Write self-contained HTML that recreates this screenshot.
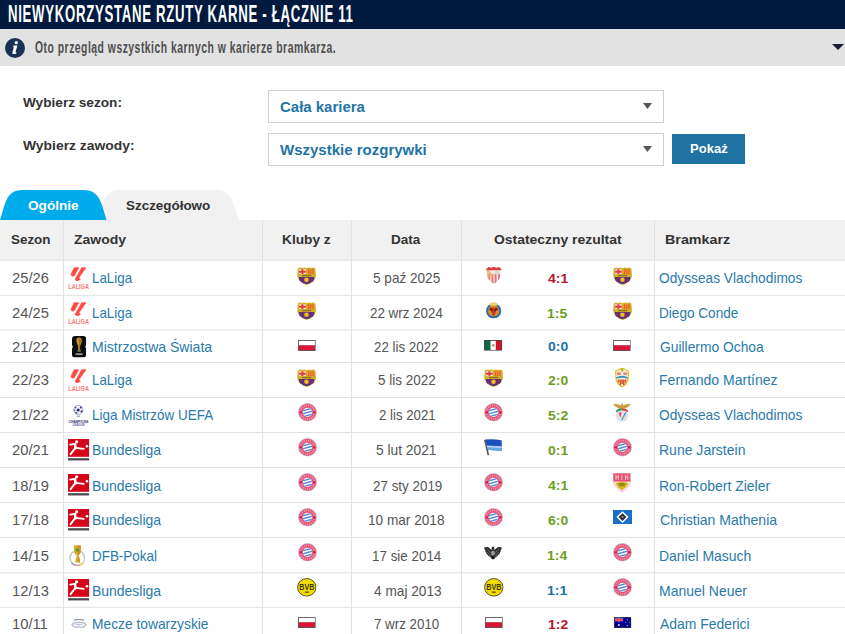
<!DOCTYPE html><html><head><meta charset="utf-8"><style>
html,body{margin:0;padding:0;width:845px;height:634px;overflow:hidden;background:#fff;font-family:"Liberation Sans",sans-serif;}
.t{position:absolute;white-space:nowrap;line-height:0;}
.a{position:absolute;}
svg{position:absolute;overflow:visible;}
</style></head><body>
<div class="a" style="left:0;top:0;width:845px;height:29px;background:#001a3f"></div>
<div class="t" style="left:8.43px;top:13.55px;font-size:23.0px;font-weight:700;color:#fff;transform:scaleX(0.5743);transform-origin:0 0;letter-spacing:1.2px;">NIEWYKORZYSTANE RZUTY KARNE - ŁĄCZNIE 11</div>
<div class="a" style="left:0;top:29px;width:845px;height:37px;background:#e2e2e2"></div>
<svg style="left:5px;top:38px" width="20" height="20" viewBox="0 0 20 20"><circle cx="10" cy="10" r="10" fill="#1b3152"/><circle cx="11.3" cy="4.6" r="1.7" fill="#fff"/><path d="M8.6 7.6 L12.4 7.6 L10.6 13.8 Q10.4 14.8 11.6 14.4 L11.3 15.5 Q9.6 16.4 8 16 Q7 15.6 7.4 14.2 L8.9 9 L8 9 Z" fill="#fff"/></svg>
<div class="t" style="left:35.00px;top:47.92px;font-size:16.8px;font-weight:700;color:#4f4f4f;transform:scaleX(0.6190);transform-origin:0 0;letter-spacing:0.8px;">Oto przegląd wszystkich karnych w karierze bramkarza.</div>
<svg style="left:832px;top:44px" width="12" height="6" viewBox="0 0 12 6"><path d="M0 0 H12 L6 6 Z" fill="#1a1f33"/></svg>
<div class="t" style="left:22.90px;top:102.78px;font-size:13.5px;font-weight:700;color:#333;transform:scaleX(1.0093);transform-origin:0 0;">Wybierz sezon:</div>
<div class="t" style="left:22.90px;top:145.58px;font-size:13.5px;font-weight:700;color:#333;transform:scaleX(1.0287);transform-origin:0 0;">Wybierz zawody:</div>
<div class="a" style="left:268px;top:90px;width:394px;height:31px;border:1px solid #cfcfcf;background:#fff"></div>
<div class="t" style="left:279.50px;top:106.98px;font-size:15.2px;font-weight:700;color:#1f74a6;transform:scaleX(0.9851);transform-origin:0 0;">Cała kariera</div>
<svg style="left:643px;top:103px" width="9" height="6" viewBox="0 0 9 6"><path d="M0 0 H9 L4.5 6 Z" fill="#555"/></svg>
<div class="a" style="left:268px;top:133px;width:394px;height:31px;border:1px solid #cfcfcf;background:#fff"></div>
<div class="t" style="left:279.70px;top:149.98px;font-size:15.2px;font-weight:700;color:#1f74a6;transform:scaleX(0.9878);transform-origin:0 0;">Wszystkie rozgrywki</div>
<svg style="left:643px;top:146px" width="9" height="6" viewBox="0 0 9 6"><path d="M0 0 H9 L4.5 6 Z" fill="#555"/></svg>
<div class="a" style="left:672px;top:134px;width:73px;height:30px;background:#1f73a3"></div>
<div class="t" style="left:689.86px;top:148.62px;font-size:12.5px;font-weight:700;color:#fff;transform:scaleX(1.0429);transform-origin:0 0;">Pokaż</div>
<svg style="left:0;top:0" width="845" height="634" viewBox="0 0 845 634"><path d="M98 220 L102.5 205 C106 194 111 190 121 190 L215 190 C225 190 230 194 234 205 L239 220 Z" fill="#f1f1f1"/><path d="M0 220 L4.5 205 C8 194 13 190 23 190 L83 190 C93 190 98 194 102 205 L106.5 220 Z" fill="#00abeb"/></svg>
<div class="t" style="left:28.00px;top:206.28px;font-size:13.5px;font-weight:700;color:#fff;transform:scaleX(1.0080);transform-origin:0 0;">Ogólnie</div>
<div class="t" style="left:125.70px;top:206.28px;font-size:13.5px;font-weight:700;color:#333;transform:scaleX(0.9941);transform-origin:0 0;">Szczegółowo</div>
<div class="a" style="left:0;top:220px;width:845px;height:40px;background:#f1f1f1"></div>
<svg style="left:0;top:0" width="845" height="634" viewBox="0 0 845 634"><rect x="0" y="259.70" width="845" height="1" fill="#e2e2e2"/><rect x="0" y="294.80" width="845" height="1" fill="#e2e2e2"/><rect x="0" y="329.40" width="845" height="1" fill="#e2e2e2"/><rect x="0" y="362.00" width="845" height="1" fill="#e2e2e2"/><rect x="0" y="397.00" width="845" height="1" fill="#e2e2e2"/><rect x="0" y="432.00" width="845" height="1" fill="#e2e2e2"/><rect x="0" y="467.00" width="845" height="1" fill="#e2e2e2"/><rect x="0" y="502.10" width="845" height="1" fill="#e2e2e2"/><rect x="0" y="536.90" width="845" height="1" fill="#e2e2e2"/><rect x="0" y="572.30" width="845" height="1" fill="#e2e2e2"/><rect x="0" y="606.80" width="845" height="1" fill="#e2e2e2"/><rect x="63" y="220" width="1" height="414" fill="#e2e2e2"/><rect x="262" y="220" width="1" height="414" fill="#e2e2e2"/><rect x="351" y="220" width="1" height="414" fill="#e2e2e2"/><rect x="461" y="220" width="1" height="414" fill="#e2e2e2"/><rect x="654" y="220" width="1" height="414" fill="#e2e2e2"/></svg>
<div class="t" style="left:11.00px;top:239.97px;font-size:13.5px;font-weight:700;color:#333;transform:scaleX(0.9923);transform-origin:0 0;">Sezon</div>
<div class="t" style="left:74.30px;top:239.97px;font-size:13.5px;font-weight:700;color:#333;transform:scaleX(1.0360);transform-origin:0 0;">Zawody</div>
<div class="t" style="left:282.19px;top:239.97px;font-size:13.5px;font-weight:700;color:#333;transform:scaleX(1.0149);transform-origin:0 0;">Kluby z</div>
<div class="t" style="left:391.00px;top:239.97px;font-size:13.5px;font-weight:700;color:#333;">Data</div>
<div class="t" style="left:494.00px;top:239.97px;font-size:13.5px;font-weight:700;color:#333;transform:scaleX(1.0306);transform-origin:0 0;">Ostateczny rezultat</div>
<div class="t" style="left:665.14px;top:239.97px;font-size:13.5px;font-weight:700;color:#333;transform:scaleX(1.0600);transform-origin:0 0;">Bramkarz</div>
<svg width="0" height="0" style="position:absolute"><defs>
<symbol id="laliga" viewBox="0 0 21 22.1" preserveAspectRatio="none"><g fill="#ff4a44" stroke="#ff4a44" stroke-width="0.8" stroke-linejoin="round"><path d="M6.2 0.8 L10.6 0.8 L6.4 8.4 Q5.6 9.2 4.2 9 Q2.6 8.6 3.2 7 Z"/><path d="M13.8 0.8 L17.8 0.8 L10.8 10.8 L12.4 12.2 L10.4 13.4 Q8.4 14 7.4 13 L7.4 12 Z"/></g><text x="0.3" y="21.9" font-family="Liberation Sans" font-weight="700" font-size="7" textLength="20.6" lengthAdjust="spacingAndGlyphs" fill="#ff6a66" opacity="0.9">LALIGA</text></symbol>
<symbol id="wc" viewBox="0 0 14.2 21.5" preserveAspectRatio="none"><path d="M3 0 H11.2 Q14.2 0 14.2 3 V8.4 Q14.2 10.4 13 10.75 Q14.2 11.1 14.2 13.1 V18.5 Q14.2 21.5 11.2 21.5 H3 Q0 21.5 0 18.5 V13.1 Q0 11.1 1.2 10.75 Q0 10.4 0 8.4 V3 Q0 0 3 0 Z" fill="#0d0d0d"/><path d="M7.1 1.6 Q10 1.6 9.9 4.6 Q9.8 7.4 8.2 9.4 Q7.6 11.4 8.3 14.2 L5.9 14.2 Q6.6 11.4 6 9.4 Q4.4 7.4 4.3 4.6 Q4.2 1.6 7.1 1.6 Z" fill="#c09232"/><path d="M7.1 1.6 Q10 1.6 9.9 4.6 Q9.8 7.4 8.2 9.4 Q7.6 11.4 8.3 14.2 L7.1 14.2 Z" fill="#8a6420" opacity="0.6"/><rect x="5.4" y="14" width="3.4" height="1.8" fill="#4f7f3a"/><rect x="3.6" y="17.4" width="7" height="1.4" fill="#bdbdbd"/></symbol>
<symbol id="ucl" viewBox="0 0 21 21" preserveAspectRatio="none"><circle cx="10.3" cy="4.9" r="4.5" fill="#f4f4fa" stroke="#7070a8" stroke-width="0.6"/><circle cx="10.2" cy="4.9" r="1.5" fill="#26266e"/><circle cx="12.9" cy="2.5" r="1.1" fill="#3c3c88"/><circle cx="7.5" cy="2.6" r="1" fill="#6060a0"/><circle cx="13.6" cy="6.4" r="1.1" fill="#3c3c88"/><circle cx="8.3" cy="7.8" r="1" fill="#3c3c88"/><circle cx="6.7" cy="5.4" r="0.8" fill="#7070a8"/><rect x="8.6" y="10.5" width="3.4" height="1.6" fill="#b0b0d0"/><text x="0.6" y="17.6" font-family="Liberation Sans" font-weight="700" font-size="4" textLength="19.8" lengthAdjust="spacingAndGlyphs" fill="#30307a">CHAMPIONS</text><text x="4.6" y="20.8" font-family="Liberation Sans" font-weight="700" font-size="3.4" textLength="12" lengthAdjust="spacingAndGlyphs" fill="#5a5a9a">LEAGUE</text></symbol>
<symbol id="bl" viewBox="0 0 21.3 21.8" preserveAspectRatio="none"><rect x="0" y="0" width="21.3" height="17.8" fill="#d3061a"/><g stroke="#fff" stroke-linecap="round" stroke-linejoin="round" fill="none"><path d="M2.2 5.6 L6.6 4.9" stroke-width="1.8"/><path d="M7 5 L7.4 9.4" stroke-width="2.6"/><path d="M7.2 9.2 L2.6 15.2" stroke-width="1.9"/><path d="M7.6 8.8 L15.8 9.9" stroke-width="1.7"/></g><circle cx="8.6" cy="2.8" r="1.6" fill="#fff"/><circle cx="19" cy="7.3" r="1.3" fill="#fff"/><rect x="0" y="19.2" width="21.3" height="2.4" fill="#4a4a4a"/></symbol>
<symbol id="dfb" viewBox="0 0 16.6 21" preserveAspectRatio="none"><circle cx="8.3" cy="12.9" r="7.3" fill="none" stroke="#c6c6c6" stroke-width="1.5"/><path d="M2.5 17.6 Q3.8 19.6 5.8 20.3" stroke="#9a9a9a" stroke-width="1.5" fill="none"/><path d="M6 20.6 Q8.3 21.1 10.4 20.6" stroke="#f58a9a" stroke-width="1.6" fill="none"/><path d="M11 20.3 Q13 19.4 14.1 17.6" stroke="#f5d050" stroke-width="1.6" fill="none"/><path d="M4.8 0.6 Q8.5 -0.2 12.1 0.6 L11.7 7.6 Q10.6 9.6 9.4 10.6 Q11 13.4 11.3 17.4 L6.2 17.4 Q6.6 13.4 8 10.6 Q5.8 9.4 5.2 7.6 Z" fill="#dcaa2a"/><path d="M8 0.6 L11.8 0.6 L11.5 7.4 Q10.4 9.4 9.4 10.6 Q10.8 13 11.2 17.4 L9.4 17.4 Z" fill="#c08a20" opacity="0.7"/><circle cx="8.1" cy="5" r="1.5" fill="#3a9a4a"/></symbol>
<symbol id="friendly" viewBox="0 0 16 9.2" preserveAspectRatio="none"><path d="M0.8 5.6 Q3 3 6 3.4 L10 3.4 Q13 3 15.2 5.6 Q13.4 8.6 10.4 8.6 Q8 8.2 8 7 Q8 8.2 5.6 8.6 Q2.6 8.6 0.8 5.6 Z" fill="#eef0f4" stroke="#b4bccb" stroke-width="1.1"/><path d="M3 1.2 Q8 -0.2 13 1.2" stroke="#8a95ab" stroke-width="1.2" fill="none"/><path d="M5 5 Q8 6.4 11 5" stroke="#c0c8d6" stroke-width="1.2" fill="none"/></symbol>
<symbol id="barca" viewBox="0 0 19.2 18.3" preserveAspectRatio="none"><path d="M0.8 1.4 Q3 -0.2 5 1 Q7.4 0 9.6 1.2 Q11.8 0 14.2 1 Q16.2 -0.2 18.4 1.4 L19 8.6 Q18.8 14.8 9.6 18.3 Q0.4 14.8 0.2 8.6 Z" fill="#d4ad2a"/><rect x="2.1" y="2.3" width="6.6" height="4.8" fill="#f3ede4"/><path d="M5.4 2.3 V7.1 M2.1 4.7 H8.7" stroke="#e53838" stroke-width="2"/><rect x="10.5" y="2.3" width="6.6" height="4.8" fill="#f0902c"/><path d="M11.6 2.3 V7.1 M13.8 2.3 V7.1 M16 2.3 V7.1" stroke="#e0582a" stroke-width="0.9"/><rect x="5" y="7.9" width="9.2" height="1.3" fill="#6a5a2a" opacity="0.7"/><path d="M1.8 9.9 H17.4 L17 13.2 Q14 16.2 9.6 17 Q5.2 16.2 2.2 13.2 Z" fill="#27409c"/><path d="M4.2 9.9 V14.8 M7.3 9.9 V16.6 M11.9 9.9 V16.6 M15 9.9 V14.8" stroke="#a8214e" stroke-width="1.7"/><circle cx="9.5" cy="12.7" r="2.2" fill="#e9c52a"/></symbol>
<symbol id="bayern" viewBox="0 0 20 20" preserveAspectRatio="none"><defs><clipPath id="bc"><circle cx="10" cy="10" r="5"/></clipPath></defs><circle cx="10" cy="10" r="9.6" fill="#e65a78"/><circle cx="10" cy="10" r="9.6" fill="none" stroke="#c8cdf2" stroke-width="0.6"/><circle cx="10" cy="10" r="7.4" fill="none" stroke="#f4a8b8" stroke-width="1.4" stroke-dasharray="1 1.2"/><circle cx="3" cy="10" r="1.3" fill="#d81e44"/><circle cx="17" cy="10" r="1.3" fill="#d81e44"/><circle cx="10" cy="10" r="5" fill="#fff"/><g clip-path="url(#bc)" stroke="#4f8ce0" stroke-width="1.5"><path d="M3 9 L17 5 M3 12.2 L17 8.2 M3 15.4 L17 11.4 M3 5.8 L17 1.8"/></g></symbol>
<symbol id="bvb" viewBox="0 0 20 20" preserveAspectRatio="none"><circle cx="10" cy="10" r="9.4" fill="#f2dc00" stroke="#3a3510" stroke-width="0.9"/><text x="10" y="12.8" font-family="Liberation Sans" font-weight="700" font-size="9.4" text-anchor="middle" textLength="15.4" lengthAdjust="spacingAndGlyphs" fill="#3c3a14">BVB</text><rect x="8" y="14.4" width="4" height="1.6" fill="#6a6320"/></symbol>
<symbol id="pl" viewBox="0 0 18 11" preserveAspectRatio="none"><rect x="0" y="0" width="18" height="11" fill="#5a5a5a"/><rect x="0.9" y="0.9" width="16.2" height="4.5" fill="#fff"/><rect x="0.9" y="5.4" width="16.2" height="4.7" fill="#dc1436"/></symbol>
<symbol id="mx" viewBox="0 0 18 11" preserveAspectRatio="none"><rect x="0" y="0" width="18" height="11" fill="#4a4a4a"/><rect x="0.9" y="0.9" width="5.5" height="9.2" fill="#0a6a48"/><rect x="6.4" y="0.9" width="5.3" height="9.2" fill="#fff"/><rect x="11.7" y="0.9" width="5.4" height="9.2" fill="#d0122a"/><circle cx="9.05" cy="5.5" r="1.4" fill="#b49a70"/></symbol>
<symbol id="au" viewBox="0 0 18 11" preserveAspectRatio="none"><rect x="0" y="0" width="18" height="11" fill="#3a3a3a"/><rect x="0.8" y="0.8" width="16.4" height="9.4" fill="#00008c"/><rect x="0.8" y="0.8" width="8.6" height="4.4" fill="#2a2ab8"/><path d="M0.8 3 H9.4" stroke="#ff4a5a" stroke-width="1.7"/><path d="M5.1 0.8 V5.2" stroke="#ff4a5a" stroke-width="1.2"/><path d="M0.8 1.3 H9.4" stroke="#ff9aa8" stroke-width="0.6"/><circle cx="5" cy="7.9" r="1" fill="#e8e8ff"/><circle cx="13.8" cy="2.8" r="0.6" fill="#c8c8ff"/><circle cx="13.8" cy="8.4" r="0.6" fill="#c8c8ff"/><circle cx="15.8" cy="5" r="0.5" fill="#c8c8ff"/><circle cx="12" cy="5.5" r="0.5" fill="#c8c8ff"/></symbol>
<symbol id="sevilla" viewBox="0 0 15.7 17" preserveAspectRatio="none"><defs><clipPath id="sv"><path d="M0.4 1.4 Q7.85 -0.6 15.3 1.4 L14.8 8 Q13.5 13.6 7.85 17 Q2.2 13.6 0.9 8 Z"/></clipPath></defs><g clip-path="url(#sv)"><rect x="0" y="0" width="16" height="17" fill="#f7eadc"/><path d="M3 7 V17 M6.4 7 V17 M9.6 7 V17 M13 7 V17" stroke="#e8707e" stroke-width="1.9"/><path d="M0 0 L9 10 L0 12 Z" fill="#e4b070" opacity="0.75"/><circle cx="11.2" cy="5.6" r="2.2" fill="#d4d4da"/><rect x="0" y="0" width="16" height="3.2" fill="#df4040"/></g><circle cx="3" cy="1.6" r="1.5" fill="#e03a3a"/><circle cx="7.85" cy="1.2" r="1.6" fill="#e03a3a"/><circle cx="12.7" cy="1.6" r="1.5" fill="#e03a3a"/></symbol>
<symbol id="villarreal" viewBox="0 0 15.3 17.6" preserveAspectRatio="none"><circle cx="7.65" cy="9.9" r="7.6" fill="#2b6fb2"/><circle cx="7.65" cy="9.9" r="5.6" fill="#e48a2c"/><path d="M3.6 6.6 L7.65 16.4 L11.7 6.6 Z" fill="#c83a1e"/><path d="M3.6 8.6 Q5.2 7.4 6.4 9.8 M8.9 9.8 Q10.1 7.4 11.7 8.6" stroke="#4a200c" stroke-width="1.5" fill="none"/><path d="M3 3.2 Q7.65 -0.6 12.3 3.2 L11.4 4.8 H3.9 Z" fill="#f0cf6a"/></symbol>
<symbol id="almeria" viewBox="0 0 14.2 19.3" preserveAspectRatio="none"><path d="M0.6 3 Q3.6 2.2 5.6 0.6 L7.1 0 L8.6 0.6 Q10.6 2.2 13.6 3 L13.2 11 Q11.8 16 7.1 19 Q2.4 16 1 11 Z" fill="#f0f0e0" stroke="#e2c21a" stroke-width="1.2"/><rect x="5.8" y="0.4" width="2.6" height="3" fill="#d9b020"/><rect x="2" y="4.4" width="3.8" height="2.6" fill="#f08080"/><rect x="8.4" y="4.4" width="3.8" height="2.6" fill="#f08080"/><path d="M1.4 9.2 Q7.1 6.2 12.8 9.2 L12.6 10.8 Q7.1 8.6 1.6 10.8 Z" fill="#3a8fbb"/><path d="M3.6 11.6 V14.6 M5.4 11.4 V17 M8.8 11.4 V17 M10.6 11.6 V14.6" stroke="#ee4a40" stroke-width="1.5"/><rect x="6.3" y="11.4" width="1.6" height="4.6" fill="#a4702a"/></symbol>
<symbol id="benfica" viewBox="0 0 18 19" preserveAspectRatio="none"><path d="M0 1.2 Q4.4 0.4 7.6 2.4 L9 0 L10.4 2.4 Q13.6 0.4 18 1.2 Q14.2 5.4 9 6.2 Q3.8 5.4 0 1.2 Z" fill="#c9a03c"/><circle cx="9" cy="12.6" r="6.3" fill="#e2e2e8"/><path d="M3 8.6 Q5.8 6.2 9 6.6" stroke="#2a9a5a" stroke-width="1.9" fill="none"/><path d="M9 6.6 Q12.2 6.2 15 8.6" stroke="#e04444" stroke-width="1.9" fill="none"/><path d="M5.6 9.4 L7.4 14.8 L8.6 9.6 Z" fill="#ee4444"/><path d="M12.8 9.4 L8.8 16.8" stroke="#44a2e2" stroke-width="1.5"/><path d="M9.6 14 L11 15" stroke="#e8c030" stroke-width="1"/></symbol>
<symbol id="hertha" viewBox="0 0 18 16.7" preserveAspectRatio="none"><path d="M0.8 0.8 L4.4 16.2" stroke="#5a5a5a" stroke-width="1.7"/><path d="M1.2 0.6 Q9 -0.2 17.6 1.2 L18 11.4 Q10.6 12 4.2 10.8 Z" fill="#1c4fbe"/><path d="M2.6 6.2 Q10.2 7 17.8 7 L18 11.4 Q10.6 12 4.2 10.8 Z" fill="#6aa6e6"/><path d="M3 7.6 Q10.4 8 17.8 8.2" stroke="#e8f0ff" stroke-width="0.9" fill="none"/></symbol>
<symbol id="stuttgart" viewBox="0 0 17.8 19.1" preserveAspectRatio="none"><path d="M0 0 H17.8 V8 Q16.4 14.6 8.9 19.1 Q1.4 14.6 0 8 Z" fill="#fde8ee" stroke="#f0a0b0" stroke-width="0.6"/><rect x="0.4" y="0.4" width="17" height="8.2" fill="#e5506a"/><path d="M3 1.6 V7 M5.6 2 Q4.6 4.6 5.6 7 M8.9 1.8 V7 M12.2 2 Q13.2 4.6 12.2 7 M14.8 1.6 V7 M3 4.2 H6 M11.8 4.2 H14.8" stroke="#f8d0d8" stroke-width="0.9" fill="none"/><path d="M2.2 10.2 Q8.9 7.8 15.6 10.2 Q13.6 14.6 8.9 17.4 Q4.2 14.6 2.2 10.2 Z" fill="#d2b81a"/><ellipse cx="8.9" cy="11.6" rx="3.4" ry="1.8" fill="#9a8812"/></symbol>
<symbol id="hsv" viewBox="0 0 19 14.1" preserveAspectRatio="none"><rect x="0" y="0" width="19" height="14.1" fill="#1b6fca"/><path d="M9.5 1.2 L15.6 7.05 L9.5 12.9 L3.4 7.05 Z" fill="#fff"/><path d="M9.5 3.2 L13.4 7.05 L9.5 10.9 L5.6 7.05 Z" fill="#2c2c2c"/><circle cx="9.5" cy="7.05" r="1" fill="#a0a0a0"/></symbol>
<symbol id="preussen" viewBox="0 0 18 13.7" preserveAspectRatio="none"><g fill="#2e2e2e"><path d="M9 0.6 Q10.4 0.6 10.4 2.2 L10.2 4 Q12 3 13.5 1.2 Q16 0.6 18 1.8 Q17.4 3.4 16.6 4.4 Q17.2 5.6 15.8 6.8 Q16 8.2 14.2 9 Q13.6 10.6 11.8 11 Q10.6 13.2 9 13.7 Q7.4 13.2 6.2 11 Q4.4 10.6 3.8 9 Q2 8.2 2.2 6.8 Q0.8 5.6 1.4 4.4 Q0.6 3.4 0 1.8 Q2 0.6 4.5 1.2 Q6 3 7.8 4 L7.6 2.2 Q7.6 0.6 9 0.6 Z"/></g><ellipse cx="9" cy="7" rx="2" ry="2.6" fill="#9a9a9a"/><path d="M3 3 L6.6 6.6 M15 3 L11.4 6.6 M2.8 6 L6.4 8.6 M15.2 6 L11.6 8.6 M5 9.6 L7.4 10.4 M13 9.6 L10.6 10.4" stroke="#8a8a8a" stroke-width="0.6"/><path d="M7.6 10.6 L9 12.4 L10.4 10.6 Z" fill="#111"/></symbol>
</defs></svg>
<div class="t" style="left:12.38px;top:278.24px;font-size:13.9px;font-weight:400;color:#555;transform:scaleX(1.0600);transform-origin:0 0;">25/26</div>
<svg style="left:68.40px;top:266.70px" width="21" height="22.1"><use href="#laliga"/></svg>
<div class="t" style="left:92.14px;top:278.24px;font-size:13.9px;font-weight:400;color:#2a7aab;transform:scaleX(0.9610);transform-origin:0 0;">LaLiga</div>
<svg style="left:297.40px;top:266.60px" width="19.2" height="18.3"><use href="#barca"/></svg>
<div class="t" style="left:372.82px;top:278.24px;font-size:13.9px;font-weight:400;color:#555;transform:scaleX(0.9776);transform-origin:0 0;">5 paź 2025</div>
<svg style="left:485.55px;top:267.40px" width="15.7" height="17"><use href="#sevilla"/></svg>
<div class="t" style="left:547.50px;top:279.04px;font-size:13.6px;font-weight:700;color:#b8142c;transform:scaleX(1.0300);transform-origin:0 0;">4:1</div>
<svg style="left:612.70px;top:266.60px" width="19.2" height="18.3"><use href="#barca"/></svg>
<div class="t" style="left:659.40px;top:278.24px;font-size:13.9px;font-weight:400;color:#2a7aab;transform:scaleX(0.9876);transform-origin:0 0;">Odysseas Vlachodimos</div>
<div class="t" style="left:12.38px;top:313.09px;font-size:13.9px;font-weight:400;color:#555;transform:scaleX(1.0600);transform-origin:0 0;">24/25</div>
<svg style="left:68.40px;top:301.55px" width="21" height="22.1"><use href="#laliga"/></svg>
<div class="t" style="left:92.14px;top:313.09px;font-size:13.9px;font-weight:400;color:#2a7aab;transform:scaleX(0.9610);transform-origin:0 0;">LaLiga</div>
<svg style="left:297.40px;top:301.70px" width="19.2" height="18.3"><use href="#barca"/></svg>
<div class="t" style="left:369.70px;top:313.09px;font-size:13.9px;font-weight:400;color:#555;transform:scaleX(0.9632);transform-origin:0 0;">22 wrz 2024</div>
<svg style="left:485.75px;top:301.00px" width="15.3" height="17.6"><use href="#villarreal"/></svg>
<div class="t" style="left:546.98px;top:313.89px;font-size:13.6px;font-weight:700;color:#6f9e22;transform:scaleX(1.0300);transform-origin:0 0;">1:5</div>
<svg style="left:612.70px;top:301.70px" width="19.2" height="18.3"><use href="#barca"/></svg>
<div class="t" style="left:659.02px;top:313.09px;font-size:13.9px;font-weight:400;color:#2a7aab;transform:scaleX(0.9787);transform-origin:0 0;">Diego Conde</div>
<div class="t" style="left:12.38px;top:346.69px;font-size:13.9px;font-weight:400;color:#555;transform:scaleX(1.0600);transform-origin:0 0;">21/22</div>
<svg style="left:71.80px;top:336.05px" width="14.2" height="21.5"><use href="#wc"/></svg>
<div class="t" style="left:92.09px;top:346.69px;font-size:13.9px;font-weight:400;color:#2a7aab;transform:scaleX(1.0102);transform-origin:0 0;">Mistrzostwa Świata</div>
<svg style="left:298.10px;top:339.70px" width="17.8" height="11"><use href="#pl"/></svg>
<div class="t" style="left:374.30px;top:346.69px;font-size:13.9px;font-weight:400;color:#555;transform:scaleX(0.9597);transform-origin:0 0;">22 lis 2022</div>
<svg style="left:484.25px;top:339.70px" width="18.3" height="10.8"><use href="#mx"/></svg>
<div class="t" style="left:548.01px;top:347.49px;font-size:13.6px;font-weight:700;color:#1b72a4;transform:scaleX(1.0300);transform-origin:0 0;">0:0</div>
<svg style="left:613.40px;top:339.70px" width="17.8" height="11"><use href="#pl"/></svg>
<div class="t" style="left:660.00px;top:346.69px;font-size:13.9px;font-weight:400;color:#2a7aab;transform:scaleX(0.9952);transform-origin:0 0;">Guillermo Ochoa</div>
<div class="t" style="left:12.38px;top:380.49px;font-size:13.9px;font-weight:400;color:#555;transform:scaleX(1.0600);transform-origin:0 0;">22/23</div>
<svg style="left:68.40px;top:368.95px" width="21" height="22.1"><use href="#laliga"/></svg>
<div class="t" style="left:92.14px;top:380.49px;font-size:13.9px;font-weight:400;color:#2a7aab;transform:scaleX(0.9610);transform-origin:0 0;">LaLiga</div>
<svg style="left:297.40px;top:368.90px" width="19.2" height="18.3"><use href="#barca"/></svg>
<div class="t" style="left:377.63px;top:380.49px;font-size:13.9px;font-weight:400;color:#555;transform:scaleX(0.9707);transform-origin:0 0;">5 lis 2022</div>
<svg style="left:483.80px;top:368.90px" width="19.2" height="18.3"><use href="#barca"/></svg>
<div class="t" style="left:548.01px;top:381.29px;font-size:13.6px;font-weight:700;color:#6f9e22;transform:scaleX(1.0300);transform-origin:0 0;">2:0</div>
<svg style="left:615.20px;top:367.80px" width="14.2" height="19.3"><use href="#almeria"/></svg>
<div class="t" style="left:658.99px;top:380.49px;font-size:13.9px;font-weight:400;color:#2a7aab;transform:scaleX(1.0103);transform-origin:0 0;">Fernando Martínez</div>
<div class="t" style="left:12.38px;top:415.49px;font-size:13.9px;font-weight:400;color:#555;transform:scaleX(1.0600);transform-origin:0 0;">21/22</div>
<svg style="left:68.00px;top:404.50px" width="21" height="21"><use href="#ucl"/></svg>
<div class="t" style="left:92.33px;top:415.49px;font-size:13.9px;font-weight:400;color:#2a7aab;transform:scaleX(0.9685);transform-origin:0 0;">Liga Mistrzów UEFA</div>
<svg style="left:297.50px;top:403.10px" width="19" height="18.6"><use href="#bayern"/></svg>
<div class="t" style="left:378.60px;top:415.49px;font-size:13.9px;font-weight:400;color:#555;transform:scaleX(0.9542);transform-origin:0 0;">2 lis 2021</div>
<svg style="left:483.90px;top:403.10px" width="19" height="18.6"><use href="#bayern"/></svg>
<div class="t" style="left:548.01px;top:416.29px;font-size:13.6px;font-weight:700;color:#6f9e22;transform:scaleX(1.0300);transform-origin:0 0;">5:2</div>
<svg style="left:613.30px;top:402.70px" width="18" height="19"><use href="#benfica"/></svg>
<div class="t" style="left:659.40px;top:415.49px;font-size:13.9px;font-weight:400;color:#2a7aab;transform:scaleX(0.9876);transform-origin:0 0;">Odysseas Vlachodimos</div>
<div class="t" style="left:12.38px;top:450.49px;font-size:13.9px;font-weight:400;color:#555;transform:scaleX(1.0600);transform-origin:0 0;">20/21</div>
<svg style="left:68.00px;top:439.10px" width="21.3" height="21.8"><use href="#bl"/></svg>
<div class="t" style="left:92.30px;top:450.49px;font-size:13.9px;font-weight:400;color:#2a7aab;transform:scaleX(1.0044);transform-origin:0 0;">Bundesliga</div>
<svg style="left:297.50px;top:438.10px" width="19" height="18.6"><use href="#bayern"/></svg>
<div class="t" style="left:375.71px;top:450.49px;font-size:13.9px;font-weight:400;color:#555;transform:scaleX(0.9917);transform-origin:0 0;">5 lut 2021</div>
<svg style="left:484.40px;top:438.70px" width="18" height="16.7"><use href="#hertha"/></svg>
<div class="t" style="left:547.50px;top:451.29px;font-size:13.6px;font-weight:700;color:#6f9e22;transform:scaleX(1.0300);transform-origin:0 0;">0:1</div>
<svg style="left:612.80px;top:438.10px" width="19" height="18.6"><use href="#bayern"/></svg>
<div class="t" style="left:658.99px;top:450.49px;font-size:13.9px;font-weight:400;color:#2a7aab;transform:scaleX(1.0083);transform-origin:0 0;">Rune Jarstein</div>
<div class="t" style="left:11.85px;top:485.54px;font-size:13.9px;font-weight:400;color:#555;transform:scaleX(1.0600);transform-origin:0 0;">18/19</div>
<svg style="left:68.00px;top:474.15px" width="21.3" height="21.8"><use href="#bl"/></svg>
<div class="t" style="left:92.30px;top:485.54px;font-size:13.9px;font-weight:400;color:#2a7aab;transform:scaleX(1.0044);transform-origin:0 0;">Bundesliga</div>
<svg style="left:297.50px;top:473.10px" width="19" height="18.6"><use href="#bayern"/></svg>
<div class="t" style="left:372.50px;top:485.54px;font-size:13.9px;font-weight:400;color:#555;transform:scaleX(0.9648);transform-origin:0 0;">27 sty 2019</div>
<svg style="left:483.90px;top:473.10px" width="19" height="18.6"><use href="#bayern"/></svg>
<div class="t" style="left:547.50px;top:486.34px;font-size:13.6px;font-weight:700;color:#6f9e22;transform:scaleX(1.0300);transform-origin:0 0;">4:1</div>
<svg style="left:613.40px;top:473.00px" width="17.8" height="19.1"><use href="#stuttgart"/></svg>
<div class="t" style="left:658.79px;top:485.54px;font-size:13.9px;font-weight:400;color:#2a7aab;transform:scaleX(1.0064);transform-origin:0 0;">Ron-Robert Zieler</div>
<div class="t" style="left:11.85px;top:520.49px;font-size:13.9px;font-weight:400;color:#555;transform:scaleX(1.0600);transform-origin:0 0;">17/18</div>
<svg style="left:68.00px;top:509.10px" width="21.3" height="21.8"><use href="#bl"/></svg>
<div class="t" style="left:92.30px;top:520.49px;font-size:13.9px;font-weight:400;color:#2a7aab;transform:scaleX(1.0044);transform-origin:0 0;">Bundesliga</div>
<svg style="left:297.50px;top:508.20px" width="19" height="18.6"><use href="#bayern"/></svg>
<div class="t" style="left:368.32px;top:520.49px;font-size:13.9px;font-weight:400;color:#555;transform:scaleX(0.9805);transform-origin:0 0;">10 mar 2018</div>
<svg style="left:483.90px;top:508.20px" width="19" height="18.6"><use href="#bayern"/></svg>
<div class="t" style="left:548.01px;top:521.29px;font-size:13.6px;font-weight:700;color:#6f9e22;transform:scaleX(1.0300);transform-origin:0 0;">6:0</div>
<svg style="left:612.80px;top:510.40px" width="19" height="14.1"><use href="#hsv"/></svg>
<div class="t" style="left:659.80px;top:520.49px;font-size:13.9px;font-weight:400;color:#2a7aab;transform:scaleX(1.0112);transform-origin:0 0;">Christian Mathenia</div>
<div class="t" style="left:11.85px;top:555.58px;font-size:13.9px;font-weight:400;color:#555;transform:scaleX(1.0600);transform-origin:0 0;">14/15</div>
<svg style="left:69.40px;top:544.60px" width="16.6" height="21"><use href="#dfb"/></svg>
<div class="t" style="left:92.33px;top:555.58px;font-size:13.9px;font-weight:400;color:#2a7aab;transform:scaleX(0.9667);transform-origin:0 0;">DFB-Pokal</div>
<svg style="left:297.50px;top:543.00px" width="19" height="18.6"><use href="#bayern"/></svg>
<div class="t" style="left:371.54px;top:555.58px;font-size:13.9px;font-weight:400;color:#555;transform:scaleX(0.9648);transform-origin:0 0;">17 sie 2014</div>
<svg style="left:484.40px;top:545.70px" width="18" height="13.7"><use href="#preussen"/></svg>
<div class="t" style="left:546.98px;top:556.39px;font-size:13.6px;font-weight:700;color:#6f9e22;transform:scaleX(1.0300);transform-origin:0 0;">1:4</div>
<svg style="left:612.80px;top:543.00px" width="19" height="18.6"><use href="#bayern"/></svg>
<div class="t" style="left:658.80px;top:555.58px;font-size:13.9px;font-weight:400;color:#2a7aab;transform:scaleX(1.0044);transform-origin:0 0;">Daniel Masuch</div>
<div class="t" style="left:11.85px;top:590.53px;font-size:13.9px;font-weight:400;color:#555;transform:scaleX(1.0600);transform-origin:0 0;">12/13</div>
<svg style="left:68.00px;top:579.15px" width="21.3" height="21.8"><use href="#bl"/></svg>
<div class="t" style="left:92.30px;top:590.53px;font-size:13.9px;font-weight:400;color:#2a7aab;transform:scaleX(1.0044);transform-origin:0 0;">Bundesliga</div>
<svg style="left:297.20px;top:578.20px" width="19.6" height="18.7"><use href="#bvb"/></svg>
<div class="t" style="left:373.50px;top:590.53px;font-size:13.9px;font-weight:400;color:#555;transform:scaleX(0.9838);transform-origin:0 0;">4 maj 2013</div>
<svg style="left:483.60px;top:578.20px" width="19.6" height="18.7"><use href="#bvb"/></svg>
<div class="t" style="left:546.98px;top:591.34px;font-size:13.6px;font-weight:700;color:#1b72a4;transform:scaleX(1.0300);transform-origin:0 0;">1:1</div>
<svg style="left:612.80px;top:578.40px" width="19" height="18.6"><use href="#bayern"/></svg>
<div class="t" style="left:658.79px;top:590.53px;font-size:13.9px;font-weight:400;color:#2a7aab;transform:scaleX(1.0081);transform-origin:0 0;">Manuel Neuer</div>
<div class="t" style="left:12.38px;top:623.88px;font-size:13.9px;font-weight:400;color:#555;transform:scaleX(1.0600);transform-origin:0 0;">10/11</div>
<svg style="left:70.60px;top:619.30px" width="16" height="9.2"><use href="#friendly"/></svg>
<div class="t" style="left:92.31px;top:623.88px;font-size:13.9px;font-weight:400;color:#2a7aab;transform:scaleX(0.9931);transform-origin:0 0;">Mecze towarzyskie</div>
<svg style="left:298.10px;top:617.10px" width="17.8" height="11"><use href="#pl"/></svg>
<div class="t" style="left:374.10px;top:623.88px;font-size:13.9px;font-weight:400;color:#555;transform:scaleX(0.9603);transform-origin:0 0;">7 wrz 2010</div>
<svg style="left:484.50px;top:617.10px" width="17.8" height="11"><use href="#pl"/></svg>
<div class="t" style="left:547.50px;top:624.69px;font-size:13.6px;font-weight:700;color:#b8142c;transform:scaleX(1.0300);transform-origin:0 0;">1:2</div>
<svg style="left:613.60px;top:617.10px" width="17.4" height="11.1"><use href="#au"/></svg>
<div class="t" style="left:659.80px;top:623.88px;font-size:13.9px;font-weight:400;color:#2a7aab;transform:scaleX(1.0011);transform-origin:0 0;">Adam Federici</div>
</body></html>
